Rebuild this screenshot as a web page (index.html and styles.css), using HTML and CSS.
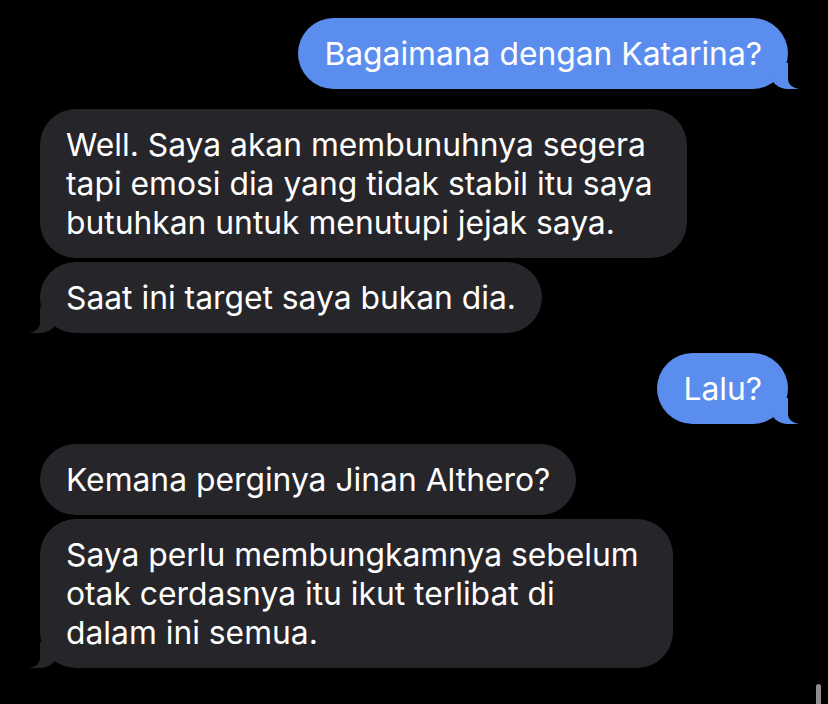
FILE: index.html
```html
<!DOCTYPE html>
<html lang="id">

<head>
    <meta charset="UTF-8">
    <meta name="viewport" content="width=device-width, initial-scale=1.0">
    <title>Pesan</title>
    <link rel="stylesheet" href="styles.css">
</head>

<body>
    <div class="chat">
        <div class="bubble sent tail">Bagaimana dengan Katarina?</div>

        <div class="bubble received wide">Well. Saya akan membunuhnya segera<br>tapi emosi dia yang tidak stabil itu saya<br>butuhkan untuk menutupi jejak saya.</div>
        <div class="bubble received tail close">Saat ini target saya bukan dia.</div>

        <div class="bubble sent tail">Lalu?</div>

        <div class="bubble received">Kemana perginya Jinan Althero?</div>
        <div class="bubble received tail close wide">Saya perlu membungkamnya sebelum<br>otak cerdasnya itu ikut terlibat di<br>dalam ini semua.</div>
    </div>

    <!-- scroll indicator -->
    <div class="scroll-thumb"></div>
</body>

</html>
```

FILE: styles.css
```css
body {
    margin: 0;
    background-color: #000;
    font-family: Inter, "Noto Sans", sans-serif;
    color: #fff;
    height: 704px;
    overflow: hidden;
    position: relative;
}

.chat {
    display: flex;
    flex-direction: column;
    padding: 18px 40px 0 40px;
}

.bubble {
    position: relative;
    font-size: 31.8px;
    line-height: 39px;
    padding: 16px 26px;
    border-radius: 36px;
    margin-top: 20px;
    width: fit-content;
    z-index: 0;
}

.bubble:first-child {
    margin-top: 0;
}

.bubble.close {
    margin-top: 4px;
}

.bubble.wide {
    padding-right: 34px;
}

.sent {
    align-self: flex-end;
    background-color: #5b8def;
}

.received {
    align-self: flex-start;
    background-color: #26262a;
}

/* tails */
.tail::before,
.tail::after {
    content: "";
    position: absolute;
    bottom: 0;
    height: 26px;
    z-index: -1;
}

.sent.tail::before {
    right: -10px;
    width: 28px;
    background-color: #5b8def;
    border-bottom-left-radius: 18px 16px;
}

.sent.tail::after {
    right: -14px;
    width: 14px;
    background-color: #000;
    border-bottom-left-radius: 12px 10px;
}

.received.tail::before {
    left: -10px;
    width: 28px;
    background-color: #26262a;
    border-bottom-right-radius: 18px 16px;
}

.received.tail::after {
    left: -14px;
    width: 14px;
    background-color: #000;
    border-bottom-right-radius: 12px 10px;
}

.scroll-thumb {
    position: absolute;
    right: 7px;
    bottom: -6px;
    width: 5px;
    height: 26px;
    border-radius: 3px;
    background-color: #8c8c8c;
}
```
